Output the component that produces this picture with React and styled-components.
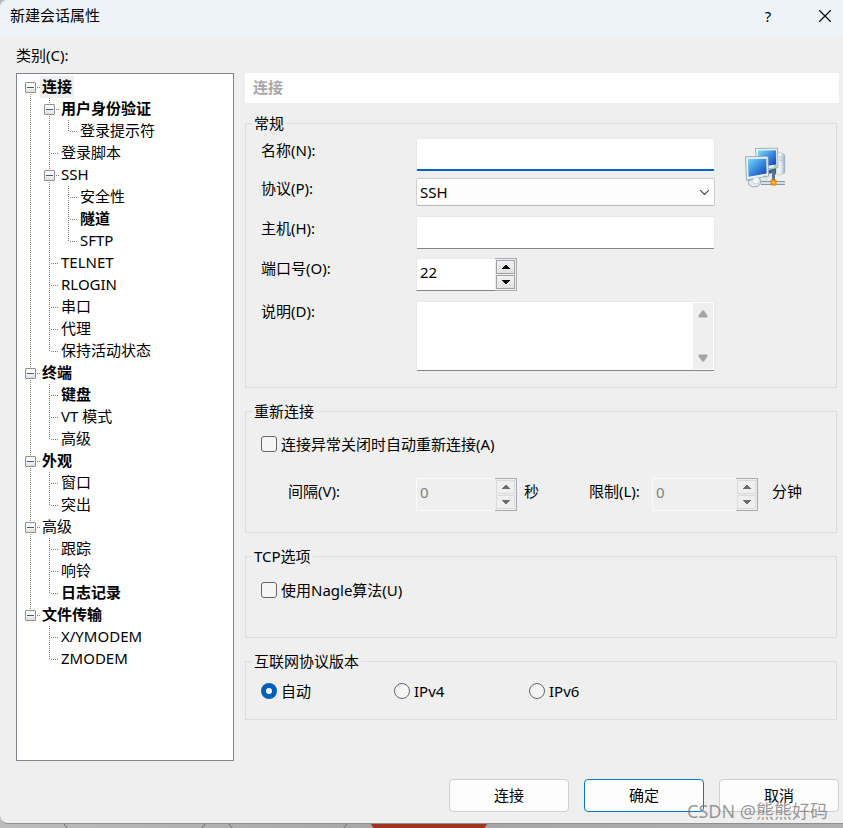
import React, { useState } from 'react'
import styled, { createGlobalStyle } from 'styled-components'

const tree = [
  {
    name: '连接', bold: true, selected: true, children: [
      { name: '用户身份验证', bold: true, children: [{ name: '登录提示符' }] },
      { name: '登录脚本' },
      {
        name: 'SSH', children: [
          { name: '安全性' },
          { name: '隧道', bold: true },
          { name: 'SFTP' },
        ],
      },
      { name: 'TELNET' },
      { name: 'RLOGIN' },
      { name: '串口' },
      { name: '代理' },
      { name: '保持活动状态' },
    ],
  },
  {
    name: '终端', bold: true, children: [
      { name: '键盘', bold: true },
      { name: 'VT 模式' },
      { name: '高级' },
    ],
  },
  { name: '外观', bold: true, children: [{ name: '窗口' }, { name: '突出' }] },
  {
    name: '高级', children: [
      { name: '跟踪' },
      { name: '响铃' },
      { name: '日志记录', bold: true },
    ],
  },
  { name: '文件传输', bold: true, children: [{ name: 'X/YMODEM' }, { name: 'ZMODEM' }] },
]

function TreeNode({ node }) {
  const [open, setOpen] = useState(true)

  return (
    <TreeItem>
      <TreeRow>
        {node.children ? (
          <Toggle type="button" aria-label={node.name} aria-expanded={open} onClick={() => setOpen(!open)}>
            <svg width="9" height="9" viewBox="0 0 9 9" shapeRendering="crispEdges">
              <path d={open ? 'M1 4h7v1H1z' : 'M1 4h7v1H1zM4 1h1v7H4z'} fill="#3d5a9b" />
            </svg>
          </Toggle>
        ) : null}
        <Dash $leaf={!node.children} />
        <TreeLabel $bold={node.bold} $selected={node.selected}>{node.name}</TreeLabel>
      </TreeRow>
      {node.children && open && (
        <TreeList>
          {node.children.map((child) => <TreeNode key={child.name} node={child} />)}
        </TreeList>
      )}
    </TreeItem>
  )
}

function Spinner({ id, value, width, disabled }) {
  const [current, setCurrent] = useState(value)

  return (
    <SpinBox $width={width}>
      <SpinInput
        id={id}
        value={current}
        disabled={disabled}
        onChange={(e) => setCurrent(Number(e.target.value) || 0)}
      />
      <SpinButtons>
        <SpinButton type="button" aria-label="增加" disabled={disabled} onClick={() => setCurrent(current + 1)}>
          <svg width="8" height="4" viewBox="0 0 8 4" shapeRendering="crispEdges">
            <path d="M3 0h2v1h1v1h1v1h1v1H0V3h1V2h1V1h1z" fill="currentColor" />
          </svg>
        </SpinButton>
        <SpinButton type="button" aria-label="减少" disabled={disabled} onClick={() => setCurrent(Math.max(0, current - 1))}>
          <svg width="8" height="4" viewBox="0 0 8 4" shapeRendering="crispEdges">
            <path d="M3 4h2V3h1V2h1V1h1V0H0v1h1v1h1v1h1z" fill="currentColor" />
          </svg>
        </SpinButton>
      </SpinButtons>
    </SpinBox>
  )
}

function NetworkIcon() {
  return (
    <svg width="41" height="42" viewBox="0 0 41 42" aria-hidden="true">
      <defs>
        <linearGradient id="screen" x1="0" y1="0" x2="1" y2="1">
          <stop offset="0" stopColor="#7fdcf8" />
          <stop offset="0.45" stopColor="#3f93e0" />
          <stop offset="1" stopColor="#1539b4" />
        </linearGradient>
        <linearGradient id="case" x1="0" y1="0" x2="1" y2="0">
          <stop offset="0" stopColor="#ffffff" />
          <stop offset="0.6" stopColor="#dbe4ea" />
          <stop offset="1" stopColor="#93a5b3" />
        </linearGradient>
        <radialGradient id="node">
          <stop offset="0" stopColor="#ffd21f" />
          <stop offset="1" stopColor="#ea7a0c" />
        </radialGradient>
      </defs>
      <path d="M32 5l6 1.500q2 .5 2 2.500V25q0 1.500-2 2L32 28z" fill="url(#case)" stroke="#b4c1cb" strokeWidth=".6" />
      <path d="M34 10l4 .6M34 13l4 .4" stroke="#a3b3bf" strokeWidth=".7" />
      <path d="M24 23l7-2v6l-4 3h-4z" fill="#3b6289" />
      <path d="M10.500 1.500L32.500 1.200 33 20.500 12 23z" fill="#e9f1f5" stroke="#93a7b7" strokeWidth=".9" />
      <path d="M13 3.500L31 3.200 31.200 17.500 14 20z" fill="url(#screen)" />
      <path d="M16 34.500h24M16 37.500h24" stroke="#8798a5" strokeWidth="1.200" />
      <path d="M16 36h24" stroke="#d5dfe6" strokeWidth="2" />
      <path d="M27 24h3v10h-3z" fill="#5d7386" />
      <path d="M20 28l7-2v4l-5 4h-5z" fill="#dce5ea" />
      <path d="M.5 9.800L23 9.500 23.500 29 1.500 33z" fill="#f0f5f8" stroke="#8ba1b3" strokeWidth=".9" />
      <path d="M2.800 12L21.300 11.700 21.600 26.500 3.500 29.800z" fill="url(#screen)" />
      <path d="M29 19l3-.4" stroke="#69c93c" strokeWidth="1" />
      <path d="M19 29.200l2-.4" stroke="#69c93c" strokeWidth="1" />
      <path d="M3 34q5-2.500 12-2.500 2 6-3 8-5 1.500-8-1.500z" fill="#e6edf1" stroke="#90a3b0" strokeWidth=".9" />
      <path d="M8 31l6-1v6q-3 2-6 0z" fill="#fafcfd" stroke="#b5c3cd" strokeWidth=".6" />
      <rect x="25.500" y="32.500" width="6" height="6" rx="1" fill="url(#node)" />
    </svg>
  )
}

function App() {
  const [version, setVersion] = useState('auto')

  return (
    <Desktop>
      <GlobalStyle />
      <Dialog>
        <TitleBar>
          <Title>新建会话属性</Title>
          <TitleButton type="button" aria-label="帮助">?</TitleButton>
          <TitleButton type="button" aria-label="关闭">
            <svg width="12" height="12" viewBox="0 0 12 12">
              <path d="M0 0L12 12M12 0L0 12" stroke="#111" strokeWidth="1.300" />
            </svg>
          </TitleButton>
        </TitleBar>

        <Caption>类别(C):</Caption>
        <Body>
          <Tree>
            <RootList>
              {tree.map((node) => <TreeNode key={node.name} node={node} />)}
            </RootList>
          </Tree>

          <Content>
            <PageHeader>连接</PageHeader>

            <Groups>
              <Group>
                <Legend>常规</Legend>
                <General>
                  <Fields>
                    <FieldRow>
                      <FieldLabel htmlFor="name" $low>名称(N):</FieldLabel>
                      <TextInput id="name" $active />
                    </FieldRow>
                    <FieldRow $gap={7}>
                      <FieldLabel htmlFor="protocol">协议(P):</FieldLabel>
                      <SelectBox>
                        <Select id="protocol" defaultValue="SSH">
                          <option>SSH</option>
                          <option>TELNET</option>
                          <option>RLOGIN</option>
                          <option>SFTP</option>
                        </Select>
                        <svg width="9" height="5" viewBox="0 0 9 5">
                          <path d="M0 0L4.500 4.500 9 0" fill="none" stroke="#444" strokeWidth="1.100" />
                        </svg>
                      </SelectBox>
                    </FieldRow>
                    <FieldRow $gap={10}>
                      <FieldLabel htmlFor="host" $low>主机(H):</FieldLabel>
                      <TextInput id="host" />
                    </FieldRow>
                    <FieldRow $gap={9}>
                      <FieldLabel htmlFor="port">端口号(O):</FieldLabel>
                      <Spinner id="port" value={22} width={101} />
                    </FieldRow>
                    <FieldRow $gap={10}>
                      <FieldLabel htmlFor="note">说明(D):</FieldLabel>
                      <NoteBox>
                        <Note id="note" />
                        <ScrollTrack>
                          <svg width="10" height="8" viewBox="0 0 10 8">
                            <path d="M4 .5h2L9.500 6v1.500H.5V6z" fill="#a3a3a3" />
                          </svg>
                          <svg width="10" height="8" viewBox="0 0 10 8">
                            <path d="M4 7.500h2L9.500 2V.5H.5V2z" fill="#a3a3a3" />
                          </svg>
                        </ScrollTrack>
                      </NoteBox>
                    </FieldRow>
                  </Fields>
                  <IconSlot>
                    <NetworkIcon />
                  </IconSlot>
                </General>
              </Group>

              <Group>
                <Legend>重新连接</Legend>
                <Reconnect>
                  <Choice>
                    <CheckBox type="checkbox" />
                    连接异常关闭时自动重新连接(A)
                  </Choice>
                  <Timing>
                    <TimingLabel htmlFor="interval">间隔(V):</TimingLabel>
                    <Spinner id="interval" value={0} width={101} disabled />
                    <Unit>秒</Unit>
                    <LimitLabel htmlFor="limit">限制(L):</LimitLabel>
                    <Spinner id="limit" value={0} width={106} disabled />
                    <Unit $wide>分钟</Unit>
                  </Timing>
                </Reconnect>
              </Group>

              <Group>
                <Legend>TCP选项</Legend>
                <TcpOptions>
                  <Choice>
                    <CheckBox type="checkbox" />
                    使用Nagle算法(U)
                  </Choice>
                </TcpOptions>
              </Group>

              <Group>
                <Legend>互联网协议版本</Legend>
                <Versions>
                  {[['auto', '自动'], ['v4', 'IPv4'], ['v6', 'IPv6']].map(([key, text]) => (
                    <Choice key={key}>
                      <Radio
                        type="radio"
                        name="version"
                        checked={version === key}
                        onChange={() => setVersion(key)}
                      />
                      {text}
                    </Choice>
                  ))}
                </Versions>
              </Group>
            </Groups>
          </Content>
        </Body>

        <Footer>
          <Button type="button">连接</Button>
          <Button type="button" $primary>确定</Button>
          <Button type="button">取消</Button>
        </Footer>
      </Dialog>

      <Behind>
        <svg width="500" height="5" viewBox="0 0 500 5">
          <path d="M64 0l4 5M205 0l-4 5M229 0l4 5M347 0l-4 5" stroke="#6d6d72" />
          <path d="M371 0h116l-3 5H374z" fill="#a1341f" />
        </svg>
      </Behind>
      <Watermark>CSDN @熊熊好码</Watermark>
    </Desktop>
  )
}

export default App

const GlobalStyle = createGlobalStyle`
  * {
    box-sizing: border-box;
  }

  body {
    margin: 0;
  }

  body, button, input, select, textarea {
    font-family: "Noto Sans", "Noto Sans CJK SC", sans-serif;
    font-size: 15px;
    line-height: 22px;
    color: #000;
  }
`

const Desktop = styled.div`
  position: relative;
  display: flex;
  flex-direction: column;
  min-height: 100vh;
  background: linear-gradient(90deg, #bcbcbc, #a4a4a4 50%, #b0b0b0);
`

const Dialog = styled.main`
  background: #efefef;
  border-bottom: 1px solid #8f8f8f;
  border-radius: 8px 0 0 8px;
  overflow: hidden;
`

const TitleBar = styled.header`
  display: flex;
  align-items: center;
  height: 35px;
  padding: 0 0 4px 10px;
  background: #eef3fa;
`

const Title = styled.h1`
  flex: 1;
  margin: 0;
  padding-bottom: 1px;
  font-size: 15px;
  font-weight: 400;
`

const TitleButton = styled.button`
  display: flex;
  align-items: center;
  justify-content: center;
  width: 36px;
  height: 30px;
  margin-left: 21px;
  padding: 0;
  border: none;
  background: none;
`

const Caption = styled.div`
  padding: 9px 16px 7px;
`

const Body = styled.div`
  display: grid;
  grid-template-columns: 218px 1fr;
  gap: 11px;
  padding: 0 4px 0 16px;
`

const Tree = styled.nav`
  min-height: 688px;
  padding: 2px 8px;
  border: 1px solid #828790;
  background: #fff;
`

const TreeItem = styled.li`
  background: repeating-linear-gradient(#808080 0 1px, transparent 1px 2px) 5px 0 / 1px 100% no-repeat;

  &:last-child {
    background-size: 1px 12px;
  }
`

const TreeList = styled.ul`
  margin: 0;
  padding: 0 0 0 19px;
  list-style: none;
`

const RootList = styled(TreeList)`
  padding: 0;

  > ${TreeItem}:first-child {
    background-position: 5px 12px;
  }
`

const TreeRow = styled.div`
  display: flex;
  align-items: center;
  height: 22px;
`

const Toggle = styled.button`
  display: flex;
  width: 11px;
  height: 11px;
  padding: 0;
  border: 1px solid #919191;
  border-radius: 1px;
  background: linear-gradient(#fff 40%, #dcdcdc);
`

const Dash = styled.span`
  width: ${(props) => (props.$leaf ? '9px' : '4px')};
  height: 1px;
  margin-left: ${(props) => (props.$leaf ? '6px' : '0')};
  background: repeating-linear-gradient(90deg, transparent 0 1px, #808080 1px 2px);
`

const TreeLabel = styled.span`
  padding: 0 2px 2px;
  line-height: 20px;
  white-space: nowrap;
  font-weight: ${(props) => (props.$bold ? 700 : 400)};
  background: ${(props) => (props.$selected ? '#efefef' : 'none')};
`

const Content = styled.section`
  min-width: 0;
`

const PageHeader = styled.h2`
  margin: 0;
  padding: 3px 8px 5px;
  font-size: 15px;
  font-weight: 700;
  color: #a8a8a8;
  background: #fff;
`

const Groups = styled.div`
  display: flex;
  flex-direction: column;
  gap: 11px;
  padding: 8px 2px 0 0;
`

const Group = styled.fieldset`
  min-width: 0;
  margin: 0;
  padding: 0 15px;
  border: 1px solid #dcdcdc;
`

const Legend = styled.legend`
  margin-left: -9px;
  padding: 0 2px;
  line-height: 24px;
`

const General = styled.div`
  display: flex;
  align-items: flex-start;
  padding: 3px 0 16px;
`

const Fields = styled.div`
  flex: 1;
  min-width: 0;
`

const FieldRow = styled.div`
  display: flex;
  align-items: flex-start;
  margin-top: ${(props) => props.$gap || 0}px;
`

const FieldLabel = styled.label`
  flex: none;
  width: 155px;
  padding-top: ${(props) => (props.$low ? '2px' : '0')};
  line-height: 20px;
`

const TextInput = styled.input`
  flex: 1;
  min-width: 0;
  height: 33px;
  padding: 0 4px;
  border: 1px solid #e8e8e8;
  border-bottom: ${(props) => (props.$active ? '2px solid #0067c0' : '1px solid #858585')};
  border-radius: 2px;
  background: #fff;
  outline: none;
`

const SelectBox = styled.div`
  flex: 1;
  display: grid;
  align-items: center;

  > * {
    grid-area: 1 / 1;
  }

  > svg {
    justify-self: end;
    margin-right: 6px;
    pointer-events: none;
  }
`

const Select = styled.select`
  appearance: none;
  height: 28px;
  padding: 0 3px;
  border: 1px solid #d0d0d0;
  border-bottom-color: #b8b8b8;
  border-radius: 2px;
  background: #fdfdfd;
`

const SpinBox = styled.div`
  flex: none;
  display: flex;
  width: ${(props) => props.$width}px;
  height: 33px;
`

const SpinInput = styled.input`
  flex: 1;
  min-width: 0;
  padding: 0 3px 6px;
  border: 1px solid #e8e8e8;
  border-right: none;
  border-bottom-color: #858585;
  background: #fff;
  outline: none;

  &:disabled {
    border-color: #fafafa;
    background: #efefef;
    color: #808080;
  }
`

const SpinButtons = styled.div`
  display: flex;
  flex-direction: column;
  gap: 1px;
  width: 22px;
  padding: 1px;
  border: 1px solid #a9a9b2;
  border-left: none;
  background: #efefef;
`

const SpinButton = styled.button`
  flex: 1;
  display: flex;
  align-items: center;
  justify-content: center;
  padding: 0;
  border: 1px solid #a2a2a6;
  background: linear-gradient(#f2f2f2, #e2e2e2);
  color: #000;

  &:disabled {
    border-color: #dadada;
    background: #efefef;
    color: #6d6d6d;
  }
`

const NoteBox = styled.div`
  flex: 1;
  display: flex;
  min-width: 0;
  height: 70px;
  padding: 1px;
  border: 1px solid #e8e8e8;
  border-bottom-color: #858585;
  border-radius: 2px;
  background: #fff;
`

const Note = styled.textarea`
  flex: 1;
  min-width: 0;
  padding: 2px;
  border: none;
  outline: none;
  resize: none;
`

const ScrollTrack = styled.div`
  display: flex;
  flex-direction: column;
  align-items: center;
  justify-content: space-between;
  width: 20px;
  padding: 7px 0;
  background: #efefef;
`

const IconSlot = styled.div`
  display: flex;
  padding: 9px 35px 0 30px;
`

const Reconnect = styled.div`
  padding: 10px 0 21px;
`

const Timing = styled.div`
  display: flex;
  padding: 23px 0 0 27px;
`

const TimingLabel = styled.label`
  flex: none;
  width: 128px;
  padding-top: 2px;
`

const LimitLabel = styled(TimingLabel)`
  width: 63px;
`

const Unit = styled.span`
  width: ${(props) => (props.$wide ? 'auto' : '72px')};
  padding: 2px 0 0 ${(props) => (props.$wide ? '14px' : '7px')};
`

const TcpOptions = styled.div`
  padding: 11px 0 36px;
`

const Versions = styled.div`
  display: grid;
  grid-template-columns: 133px 135px 1fr;
  padding: 7px 0 17px;
`

const Choice = styled.label`
  display: flex;
  align-items: center;
  gap: 4px;
`

const CheckBox = styled.input`
  appearance: none;
  width: 16px;
  height: 16px;
  margin: 0;
  border: 1px solid #666;
  border-radius: 3px;
  background: #f5f5f5;

  &:checked {
    border: 5px solid #005fb8;
  }
`

const Radio = styled(CheckBox)`
  border-radius: 50%;
`

const Footer = styled.footer`
  display: flex;
  justify-content: flex-end;
  gap: 15px;
  padding: 18px 4px 11px;
`

const Button = styled.button`
  width: 120px;
  height: 33px;
  padding: 0 0 2px;
  border: 1px solid ${(props) => (props.$primary ? '#0078d4' : '#d0d0d0')};
  border-radius: 4px;
  background: #fdfdfd;
`

const Behind = styled.div`
  display: flex;
  overflow: hidden;
`

const Watermark = styled.div`
  position: absolute;
  right: 15px;
  bottom: 6px;
  font-size: 18px;
  line-height: 24px;
  color: rgba(110, 110, 110, 0.7);
`
